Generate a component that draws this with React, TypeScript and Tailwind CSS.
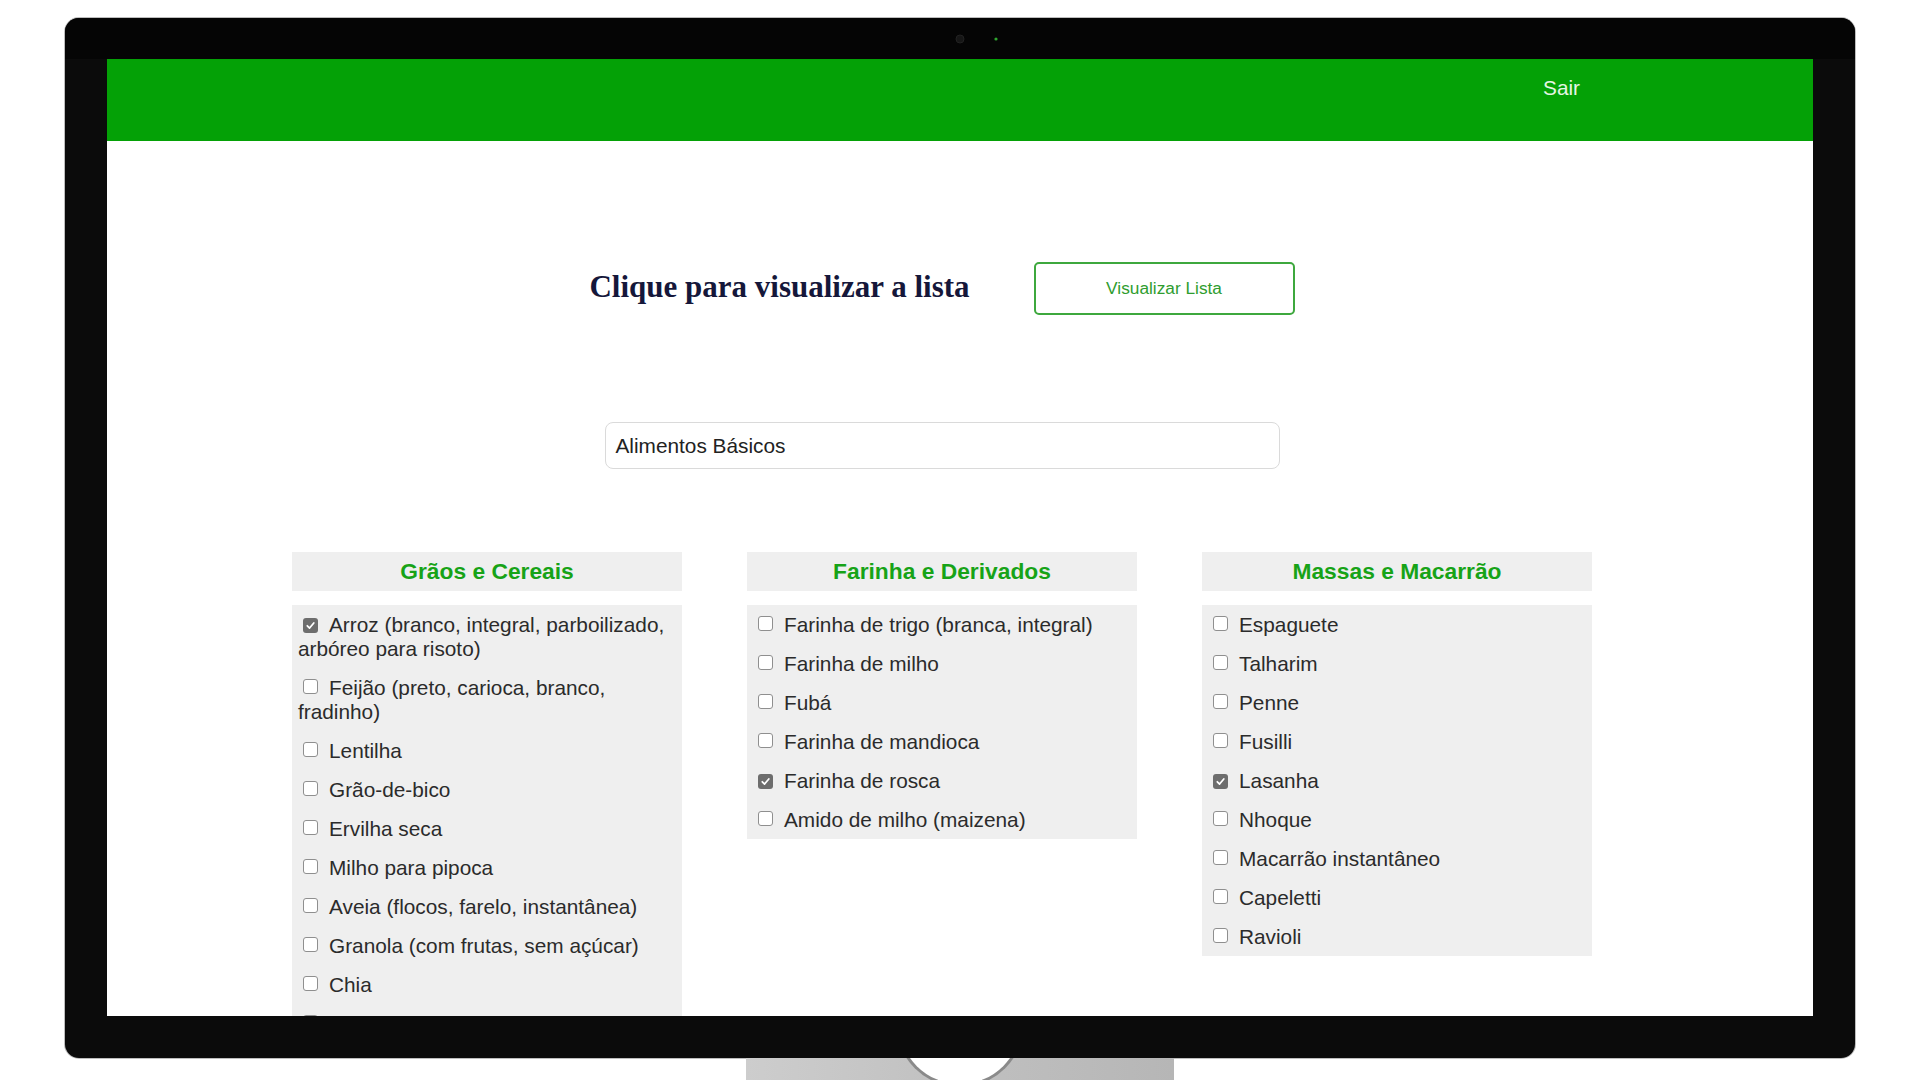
import React from "react";

type Item = { label: string; checked?: boolean };

const columns: { title: string; items: Item[] }[] = [
  {
    title: "Grãos e Cereais",
    items: [
      { label: "Arroz (branco, integral, parboilizado, arbóreo para risoto)", checked: true },
      { label: "Feijão (preto, carioca, branco, fradinho)" },
      { label: "Lentilha" },
      { label: "Grão-de-bico" },
      { label: "Ervilha seca" },
      { label: "Milho para pipoca" },
      { label: "Aveia (flocos, farelo, instantânea)" },
      { label: "Granola (com frutas, sem açúcar)" },
      { label: "Chia" },
      { label: "Quinoa" },
    ],
  },
  {
    title: "Farinha e Derivados",
    items: [
      { label: "Farinha de trigo (branca, integral)" },
      { label: "Farinha de milho" },
      { label: "Fubá" },
      { label: "Farinha de mandioca" },
      { label: "Farinha de rosca", checked: true },
      { label: "Amido de milho (maizena)" },
    ],
  },
  {
    title: "Massas e Macarrão",
    items: [
      { label: "Espaguete" },
      { label: "Talharim" },
      { label: "Penne" },
      { label: "Fusilli" },
      { label: "Lasanha", checked: true },
      { label: "Nhoque" },
      { label: "Macarrão instantâneo" },
      { label: "Capeletti" },
      { label: "Ravioli" },
    ],
  },
];

function Box({ checked }: { checked?: boolean }) {
  if (checked) {
    return (
      <span className="inline-flex items-center justify-center w-[15px] h-[15px] rounded-[3px] bg-[#6d6d6d] ml-[5px] mr-[11px] align-[1px]">
        <svg width="11" height="11" viewBox="0 0 12 12">
          <path d="M2.5 6.3 L5 8.8 L9.6 3.2" fill="none" stroke="#ffffff" strokeWidth="1.9" strokeLinecap="round" strokeLinejoin="round" />
        </svg>
      </span>
    );
  }
  return (
    <span className="inline-block w-[15px] h-[15px] rounded-[3px] bg-white border-[1.5px] border-[#8f8f8f] ml-[5px] mr-[11px] align-[1px]" />
  );
}

export default function App() {
  const sans = { fontFamily: '"Liberation Sans", Arial, Helvetica, sans-serif' };
  return (
    <div className="w-[1920px] h-[1080px] bg-white overflow-hidden flex flex-col items-center pt-[18px]" style={sans}>
      {/* Monitor */}
      <div className="w-[1790px] h-[1040px] shrink-0 rounded-[14px] bg-[#0b0b0b] shadow-[0_0_0_1px_#bdbdbd] flex flex-col px-[42px]">
        <div className="h-[41px] flex items-center justify-center bg-[#050505] -mx-[42px] rounded-t-[14px]">
          <svg width="80" height="10" viewBox="0 0 80 10">
            <circle cx="40" cy="5" r="4" fill="#161616" stroke="#222" strokeWidth="1" />
            <circle cx="76" cy="5" r="1.6" fill="#2fa52f" />
          </svg>
        </div>
        <div className="h-[957px] bg-white overflow-hidden flex flex-col">
          {/* Header */}
          <div className="h-[82px] shrink-0 bg-[#04a106] flex justify-end items-start pt-[17px] pr-[233px]">
            <span className="text-[20.8px] leading-[24px] text-[#e4f6e4]">Sair</span>
          </div>
          {/* Main */}
          <div className="flex flex-col items-center pr-[36px] pt-[121px]">
            <div className="flex items-center gap-[64px] h-[53px]">
              <h1
                className="text-[31px] font-bold text-[#15173a] leading-none pb-[5px]"
                style={{ fontFamily: '"Liberation Serif", "Times New Roman", serif' }}
              >
                Clique para visualizar a lista
              </h1>
              <button className="w-[261px] h-[53px] rounded-[5px] border-[2.5px] border-[#3ea83e] bg-white text-[17.3px] text-[#2f9d2f]">
                Visualizar Lista
              </button>
            </div>
            <div className="mt-[107px] w-[675px] h-[47px] rounded-[8px] border-[1.5px] border-[#dadada] flex items-center pl-[10px] text-[20.8px] text-[#222]">
              Alimentos Básicos
            </div>
            <div className="mt-[83px] flex items-start gap-[65px]">
              {columns.map((col) => (
                <div key={col.title} className="w-[390px] flex flex-col">
                  <div className="h-[39px] bg-[#efefef] flex items-center justify-center text-[22.8px] font-bold text-[#17a317]">
                    {col.title}
                  </div>
                  <div className="mt-[14px] bg-[#efefef] flex flex-col">
                    {col.items.map((it) => (
                      <div key={it.label} className="pl-[6px] pr-[8px] py-[7.5px] leading-[24px] text-[20.8px] text-[#2b2b2b]">
                        <Box checked={it.checked} />
                        {it.label}
                      </div>
                    ))}
                  </div>
                </div>
              ))}
            </div>
          </div>
        </div>
      </div>
      {/* Stand */}
      <svg width="428" height="22" viewBox="0 0 428 22" className="shrink-0">
        <defs>
          <linearGradient id="st" x1="0" y1="0" x2="1" y2="0">
            <stop offset="0" stopColor="#cdcdcd" />
            <stop offset="0.5" stopColor="#c0c0c0" />
            <stop offset="1" stopColor="#b6b6b6" />
          </linearGradient>
        </defs>
        <rect x="0" y="0" width="428" height="22" fill="url(#st)" />
        <circle cx="214" cy="-35" r="64" fill="#8a8a8a" />
        <circle cx="214" cy="-35" r="61" fill="#ffffff" />
      </svg>
    </div>
  );
}
